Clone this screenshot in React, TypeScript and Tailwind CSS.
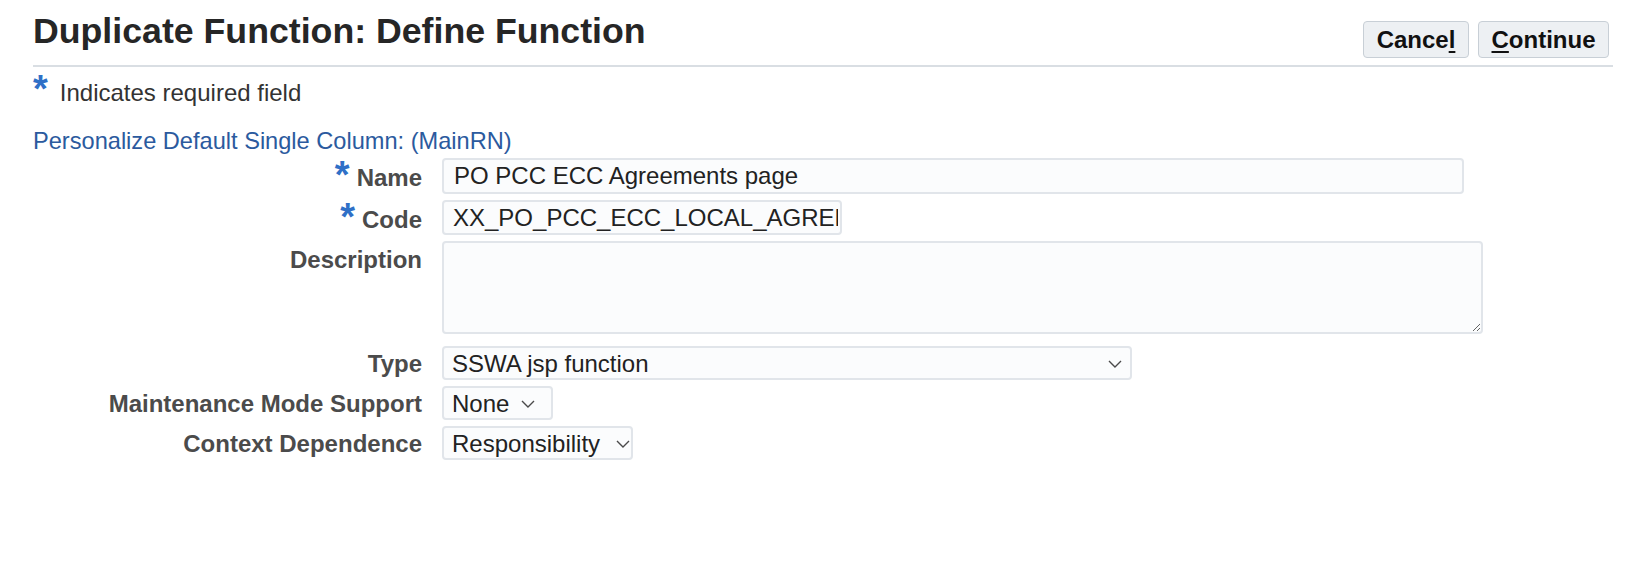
import React from 'react';

const Star = ({ className = '' }: { className?: string }) => (
  <span className={`text-[38px] leading-[38px] font-bold text-[#2f70c7] ${className}`}>*</span>
);

const Chevron = ({ className }: { className: string }) => (
  <svg
    className={`pointer-events-none absolute top-[14px] ${className}`}
    width="14"
    height="8"
    viewBox="0 0 14 8"
    fill="none"
    stroke="#4a4a4a"
    strokeWidth="1.4"
  >
    <polyline points="1,1 7,7 13,1" />
  </svg>
);

const Label = ({
  text,
  required,
  lead,
  h,
}: {
  text: string;
  required?: boolean;
  lead: string;
  h: string;
}) => (
  <div className={`justify-self-end flex justify-end items-start ${h}`}>
    {required && <Star className="-mt-[2px] mr-[7px]" />}
    <span className={`text-[24px] font-bold text-[#4b4b4b] whitespace-nowrap ${lead}`}>{text}</span>
  </div>
);

const fieldBox =
  'border-2 border-[#e1e5ea] rounded-[4px] bg-[#fbfcfd] text-[24px] text-[#222] outline-none';

const Select = ({ value, width, chev }: { value: string; width: string; chev: string }) => (
  <div className={`relative ${width}`}>
    <select
      defaultValue={value}
      className={`${fieldBox} appearance-none w-full h-[34px] pl-[8px] pt-[2px] leading-[28px]`}
    >
      <option>{value}</option>
    </select>
    <Chevron className={chev} />
  </div>
);

export default function App() {
  return (
    <div className="min-h-screen bg-white font-['Liberation_Sans',Arial,sans-serif] text-[#333]">
      <div className="pl-[33px] pr-[23px]">
        <header className="h-[67px] border-b-2 border-[#d9dee3] flex justify-between items-start">
          <h1 className="mt-[14px] text-[35.7px] leading-[35px] font-bold text-[#262626]">
            Duplicate Function: Define Function
          </h1>
          <div className="mt-[21px] mr-[4px] flex gap-[9px]">
            <button className="w-[106px] h-[37px] rounded-[4px] border border-[#c8cfd6] bg-[#edf0f3] text-[24px] font-bold text-[#111]">
              Cance<span className="underline underline-offset-[3px]">l</span>
            </button>
            <button className="w-[131px] h-[37px] rounded-[4px] border border-[#c8cfd6] bg-[#edf0f3] text-[24px] font-bold text-[#111]">
              <span className="underline underline-offset-[3px]">C</span>ontinue
            </button>
          </div>
        </header>
      </div>

      <div className="pl-[33px]">
        <div className="flex items-start mt-[3px]">
          <Star />
          <span className="mt-[9px] ml-[12px] text-[24px] leading-[28px] text-[#333]">
            Indicates required field
          </span>
        </div>

        <a href="#" className="block mt-[19px] text-[23.6px] leading-[28px] text-[#2b5a9e]">
          Personalize Default Single Column: (MainRN)
        </a>

        <div className="mt-[3px] grid grid-cols-[389px_auto] gap-x-[20px] gap-y-[6px] justify-items-start items-start">
          <Label text="Name" required lead="leading-[40px]" h="h-[36px]" />
          <input
            defaultValue="PO PCC ECC Agreements page"
            className={`${fieldBox} w-[1022px] h-[36px] pl-[10px]`}
          />

          <Label text="Code" required lead="leading-[39px]" h="h-[35px]" />
          <input
            defaultValue="XX_PO_PCC_ECC_LOCAL_AGREEMENTS"
            className={`${fieldBox} w-[400px] h-[35px] pl-[9px] pr-[2px]`}
          />

          <Label text="Description" lead="leading-[37px]" h="h-[36px]" />
          <textarea className={`${fieldBox} w-[1041px] h-[93px] px-[9px]`} />

          <div className="mt-[6px] justify-self-end">
            <Label text="Type" lead="leading-[36px]" h="h-[34px]" />
          </div>
          <div className="mt-[6px]">
            <Select value="SSWA jsp function" width="w-[690px]" chev="right-[10px]" />
          </div>

          <Label text="Maintenance Mode Support" lead="leading-[36px]" h="h-[34px]" />
          <Select value="None" width="w-[111px]" chev="right-[18px]" />

          <Label text="Context Dependence" lead="leading-[36px]" h="h-[34px]" />
          <Select value="Responsibility" width="w-[191px]" chev="right-[3px]" />
        </div>
      </div>
    </div>
  );
}
